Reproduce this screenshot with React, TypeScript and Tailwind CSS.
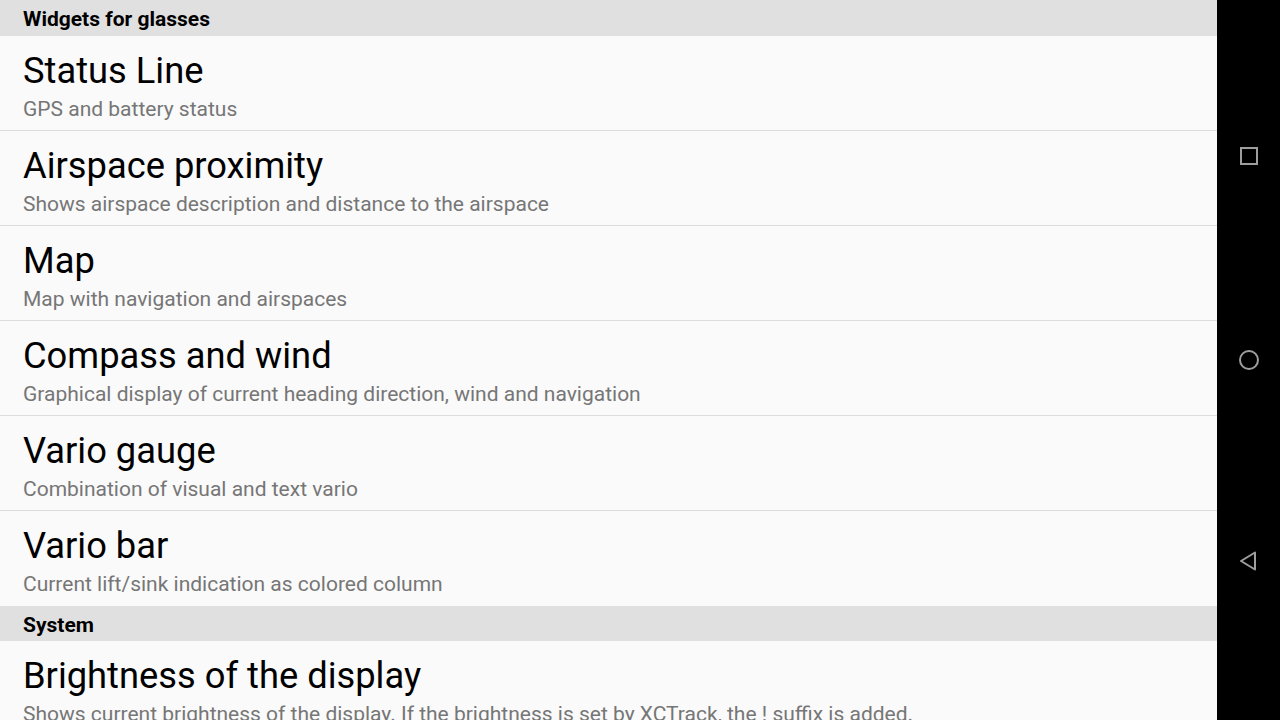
import React from "react";

type Item = { title: string; sub: string };

const widgets: Item[] = [
  { title: "Status Line", sub: "GPS and battery status" },
  { title: "Airspace proximity", sub: "Shows airspace description and distance to the airspace" },
  { title: "Map", sub: "Map with navigation and airspaces" },
  { title: "Compass and wind", sub: "Graphical display of current heading direction, wind and navigation" },
  { title: "Vario gauge", sub: "Combination of visual and text vario" },
  { title: "Vario bar", sub: "Current lift/sink indication as colored column" },
];

const system: Item[] = [
  {
    title: "Brightness of the display",
    sub: "Shows current brightness of the display. If the brightness is set by XCTrack, the ! suffix is added.",
  },
];

function Header({ label, tall }: { label: string; tall?: boolean }) {
  return (
    <div className={(tall ? "h-[36px]" : "h-[35px]") + " shrink-0 bg-[#e0e0e0] pl-[23px] pt-[7px]"}>
      <div className="text-[21px] leading-[24px] font-bold text-black">{label}</div>
    </div>
  );
}

function Row({ item, last }: { item: Item; last: boolean }) {
  return (
    <div
      className={
        "h-[95px] shrink-0 pl-[23px] pt-[14px] " +
        (last ? "" : "border-b border-[#dcdcdc]")
      }
    >
      <div className="text-[36.3px] leading-[42px] text-black whitespace-nowrap">{item.title}</div>
      <div className="mt-[5px] text-[21px] leading-[24px] text-[#767676] whitespace-nowrap">{item.sub}</div>
    </div>
  );
}

export default function App() {
  return (
    <div
      className="flex h-[720px] w-[1280px] overflow-hidden bg-[#fafafa]"
      style={{ fontFamily: "Roboto, 'Noto Sans', sans-serif" }}
    >
      <div className="flex w-[1217px] flex-col overflow-hidden">
        <Header label="Widgets for glasses" tall />
        {widgets.map((w, i) => (
          <Row key={w.title} item={w} last={i === widgets.length - 1} />
        ))}
        <Header label="System" />
        {system.map((w) => (
          <Row key={w.title} item={w} last />
        ))}
      </div>
      <div className="flex w-[63px] flex-col items-center bg-black">
        <div className="mt-[146px]">
          <svg width="20" height="20" viewBox="0 0 20 20">
            <rect x="2" y="2" width="16" height="16" fill="none" stroke="#9e9e9e" strokeWidth="2" />
          </svg>
        </div>
        <div className="mt-[183px]">
          <svg width="22" height="22" viewBox="0 0 22 22">
            <circle cx="11" cy="11" r="9" fill="none" stroke="#9e9e9e" strokeWidth="2" />
          </svg>
        </div>
        <div className="mt-[179px]">
          <svg width="22" height="22" viewBox="0 0 22 22">
            <path d="M17 2.5 L3 11 L17 19.5 Z" fill="none" stroke="#9e9e9e" strokeWidth="2" strokeLinejoin="round" />
          </svg>
        </div>
      </div>
    </div>
  );
}
